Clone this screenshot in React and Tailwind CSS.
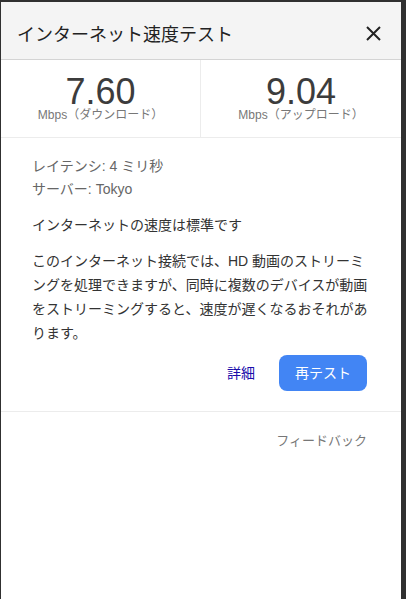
export default function App() {
  const font = { fontFamily: '"Liberation Sans", "Noto Sans CJK JP", sans-serif' };

  return (
    <div
      className="w-[406px] h-[599px] bg-[#303030] pt-[2px] pl-px pr-[5px] overflow-hidden"
      style={font}
    >
      <div className="bg-white h-full flex flex-col">
        {/* header */}
        <div className="h-[58px] bg-[#f4f4f4] border-b border-[#d4d4d4] flex items-start justify-between pl-[16px] pr-[20px]">
          <h1 className="pt-[21px] text-[18px] leading-[24px] text-[#222]">
            インターネット速度テスト
          </h1>
          <button className="mt-[23px] w-[16px] h-[16px] flex items-center justify-center">
            <svg width="15" height="15" viewBox="0 0 15 15">
              <path d="M1 1 L14 14 M14 1 L1 14" stroke="#222" strokeWidth="2" />
            </svg>
          </button>
        </div>

        {/* stats */}
        <div className="grid grid-cols-2 border-b border-[#ececec]">
          <div className="flex flex-col items-center pt-[15px] pb-[16px] border-r border-[#ececec]">
            <div className="text-[36px] leading-[34px] text-[#3c3c3c]">7.60</div>
            <div className="text-[12px] leading-[12px] text-[#777]">
              Mbps（ダウンロード）
            </div>
          </div>
          <div className="flex flex-col items-center pt-[15px] pb-[16px]">
            <div className="text-[36px] leading-[34px] text-[#3c3c3c]">9.04</div>
            <div className="text-[12px] leading-[12px] text-[#777]">
              Mbps（アップロード）
            </div>
          </div>
        </div>

        {/* body */}
        <div className="pl-[31px] pr-[34px] pt-[17px]">
          <div className="text-[14px] leading-[23px] text-[#666]">
            <p>レイテンシ: 4 ミリ秒</p>
            <p>サーバー: Tokyo</p>
          </div>
          <p className="mt-[12px] text-[14px] leading-[24px] text-[#333]">
            インターネットの速度は標準です
          </p>
          <p className="mt-[12px] text-[14px] leading-[24px] text-[#333] whitespace-nowrap">
            このインターネット接続では、HD 動画のストリーミ
            <br />
            ングを処理できますが、同時に複数のデバイスが動画
            <br />
            をストリーミングすると、速度が遅くなるおそれがあ
            <br />
            ります。
          </p>
          <div className="mt-[10px] flex items-center justify-end gap-[24px]">
            <a className="text-[14px] text-[#1a0dab]">詳細</a>
            <button className="h-[36px] px-[16px] rounded-[8px] bg-[#4285f4] text-white text-[14px]">
              再テスト
            </button>
          </div>
        </div>

        <div className="mt-[20px] border-t border-[#ececec]" />

        <div className="pr-[34px] pt-[19px] flex justify-end">
          <span className="text-[13px] leading-[20px] text-[#777]">フィードバック</span>
        </div>
      </div>
    </div>
  );
}
